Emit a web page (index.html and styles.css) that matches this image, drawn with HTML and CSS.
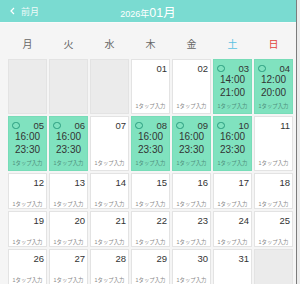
FILE: index.html
```html
<!DOCTYPE html>
<html lang="ja">
<head>
<meta charset="UTF-8" />
<meta name="viewport" content="width=device-width, initial-scale=1" />
<title>シフト入力</title>
<link rel="stylesheet" href="styles.css">
</head>
<body>

<div class="page">
  <div class="topbar">
    <a class="back" href="#">
      <svg width="5" height="8" viewBox="0 0 5 8"><polyline points="4,1 1,4 4,7" fill="none" stroke="#fff" stroke-width="1.2"/></svg>
      前月
    </a>
    <div class="title"><span class="year">2026年</span><span class="month">01月</span></div>
    <div></div>
  </div>

  <div class="weekdays">
    <div>月</div><div>火</div><div>水</div><div>木</div><div>金</div><div class="sat">土</div><div class="sun">日</div>
  </div>

  <div class="weeks">
    <!-- 1週目 -->
    <div class="week tall">
      <div class="cell blank"></div>
      <div class="cell blank"></div>
      <div class="cell blank"></div>
      <div class="cell"><div class="head"><span class="num">01</span></div><div class="tap">1タップ入力</div></div>
      <div class="cell"><div class="head"><span class="num">02</span></div><div class="tap">1タップ入力</div></div>
      <div class="cell shift"><div class="head"><span class="mark"></span><span class="num">03</span></div><div class="times">14:00<br>21:00</div><div class="tap">1タップ入力</div></div>
      <div class="cell shift"><div class="head"><span class="mark"></span><span class="num">04</span></div><div class="times">12:00<br>20:00</div><div class="tap">1タップ入力</div></div>
    </div>
    <!-- 2週目 -->
    <div class="week tall">
      <div class="cell shift"><div class="head"><span class="mark"></span><span class="num">05</span></div><div class="times">16:00<br>23:30</div><div class="tap">1タップ入力</div></div>
      <div class="cell shift"><div class="head"><span class="mark"></span><span class="num">06</span></div><div class="times">16:00<br>23:30</div><div class="tap">1タップ入力</div></div>
      <div class="cell"><div class="head"><span class="num">07</span></div><div class="tap">1タップ入力</div></div>
      <div class="cell shift"><div class="head"><span class="mark"></span><span class="num">08</span></div><div class="times">16:00<br>23:30</div><div class="tap">1タップ入力</div></div>
      <div class="cell shift"><div class="head"><span class="mark"></span><span class="num">09</span></div><div class="times">16:00<br>23:30</div><div class="tap">1タップ入力</div></div>
      <div class="cell shift"><div class="head"><span class="mark"></span><span class="num">10</span></div><div class="times">16:00<br>23:30</div><div class="tap">1タップ入力</div></div>
      <div class="cell"><div class="head"><span class="num">11</span></div><div class="tap">1タップ入力</div></div>
    </div>
    <!-- 3週目 -->
    <div class="week">
      <div class="cell"><div class="head"><span class="num">12</span></div><div class="tap">1タップ入力</div></div>
      <div class="cell"><div class="head"><span class="num">13</span></div><div class="tap">1タップ入力</div></div>
      <div class="cell"><div class="head"><span class="num">14</span></div><div class="tap">1タップ入力</div></div>
      <div class="cell"><div class="head"><span class="num">15</span></div><div class="tap">1タップ入力</div></div>
      <div class="cell"><div class="head"><span class="num">16</span></div><div class="tap">1タップ入力</div></div>
      <div class="cell"><div class="head"><span class="num">17</span></div><div class="tap">1タップ入力</div></div>
      <div class="cell"><div class="head"><span class="num">18</span></div><div class="tap">1タップ入力</div></div>
    </div>
    <!-- 4週目 -->
    <div class="week">
      <div class="cell"><div class="head"><span class="num">19</span></div><div class="tap">1タップ入力</div></div>
      <div class="cell"><div class="head"><span class="num">20</span></div><div class="tap">1タップ入力</div></div>
      <div class="cell"><div class="head"><span class="num">21</span></div><div class="tap">1タップ入力</div></div>
      <div class="cell"><div class="head"><span class="num">22</span></div><div class="tap">1タップ入力</div></div>
      <div class="cell"><div class="head"><span class="num">23</span></div><div class="tap">1タップ入力</div></div>
      <div class="cell"><div class="head"><span class="num">24</span></div><div class="tap">1タップ入力</div></div>
      <div class="cell"><div class="head"><span class="num">25</span></div><div class="tap">1タップ入力</div></div>
    </div>
    <!-- 5週目 -->
    <div class="week">
      <div class="cell"><div class="head"><span class="num">26</span></div><div class="tap">1タップ入力</div></div>
      <div class="cell"><div class="head"><span class="num">27</span></div><div class="tap">1タップ入力</div></div>
      <div class="cell"><div class="head"><span class="num">28</span></div><div class="tap">1タップ入力</div></div>
      <div class="cell"><div class="head"><span class="num">29</span></div><div class="tap">1タップ入力</div></div>
      <div class="cell"><div class="head"><span class="num">30</span></div><div class="tap">1タップ入力</div></div>
      <div class="cell"><div class="head"><span class="num">31</span></div></div>
      <div class="cell blank"></div>
    </div>
  </div>
</div>

</body>
</html>
```

FILE: styles.css
```css
/* --- Genel --- */
body {
  margin: 0;
  background: #ececec;
  font-family: "Liberation Sans", "Noto Sans CJK JP", sans-serif;
  color: #333;
}
.page {
  width: 296px;
  min-height: 284px;
  background: #f5f5f5;
  border-right: 1px solid #7c7c7c;
}

/* Üst bar */
.topbar {
  height: 22px;
  background: #7adbd1;
  display: grid;
  grid-template-columns: 1fr auto 1fr;
  align-items: center;
  color: #fff;
  border-bottom: 1px solid #fafafa;
}
.back {
  display: flex;
  align-items: center;
  gap: 6px;
  padding-left: 10px;
  font-size: 9px;
  color: #eefaf8;
  text-decoration: none;
}
.title {
  white-space: nowrap;
}
.title .year {
  font-size: 9px;
}
.title .month {
  font-size: 12.5px;
}

/* Haftanın günleri */
.weekdays {
  display: grid;
  grid-template-columns: repeat(7, 39px);
  gap: 2px;
  padding: 15px 0 7px 8px;
  font-size: 10px;
  line-height: 14px;
  text-align: center;
  color: #666;
}
.weekdays .sat {
  color: #5cc1e2;
}
.weekdays .sun {
  color: #e2443d;
}

/* Takvim */
.weeks {
  display: flex;
  flex-direction: column;
  gap: 2px;
  padding-left: 8px;
}
.week {
  display: grid;
  grid-template-columns: repeat(7, 39px);
  gap: 2px;
}
.cell {
  box-sizing: border-box;
  min-height: 36px;
  display: flex;
  flex-direction: column;
  padding: 3px 2px 0 2px;
  background: #fff;
  border: 1px solid #e3e3e3;
}
.week.tall .cell {
  min-height: 55px;
  padding-bottom: 3.5px;
}
.cell.blank {
  background: #ebebeb;
}
.cell.shift {
  background: #80e2bf;
  border-color: #78dcb8;
}
.head {
  display: flex;
  align-items: center;
  height: 11px;
}
.num {
  margin-left: auto;
  font-size: 9.5px;
  line-height: 11px;
  color: #333;
}
.mark {
  box-sizing: border-box;
  width: 7.5px;
  height: 7.5px;
  margin-left: 1px;
  border: 1.4px solid #2a9c7e;
  border-radius: 50%;
}
.times {
  font-size: 10px;
  line-height: 12.5px;
  text-align: center;
  color: #333;
}
.tap {
  margin-top: auto;
  font-size: 5.4px;
  line-height: 7px;
  text-align: center;
  white-space: nowrap;
  color: #888;
}
.cell.shift .tap {
  color: #4f8f7c;
}
```
